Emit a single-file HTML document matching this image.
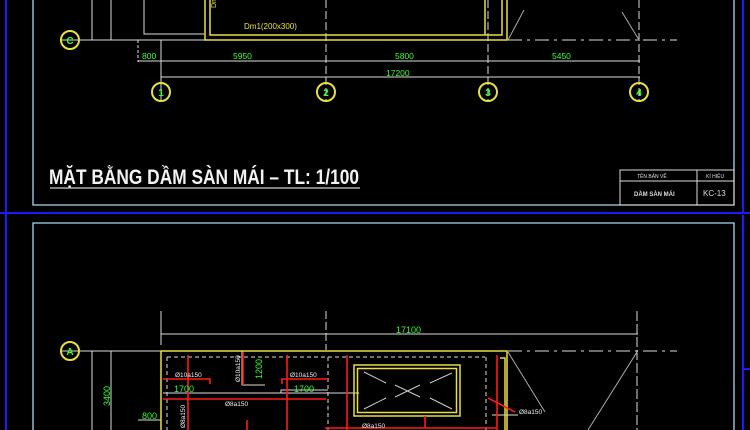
<!DOCTYPE html>
<html><head><meta charset="utf-8"><style>
html,body{margin:0;padding:0;background:#000;width:750px;height:430px;overflow:hidden}
svg{display:block}
text{font-family:"Liberation Sans",sans-serif}
.t{font-family:"Liberation Sans Narrow","Liberation Sans",sans-serif}
</style></head><body>
<svg width="750" height="430" viewBox="0 0 750 430" xmlns="http://www.w3.org/2000/svg">
<rect width="750" height="430" fill="#000"/>
<g stroke="#1a1aff" stroke-width="2" fill="none">
<line x1="6" y1="0" x2="6" y2="430"/>
<line x1="0" y1="213" x2="750" y2="213"/>
<line x1="743" y1="0" x2="743" y2="213"/>
<line x1="743" y1="215" x2="743" y2="430"/>
<line x1="743" y1="369" x2="750" y2="369"/>
</g>
<g stroke="#a8d8f0" stroke-width="1.3" fill="none">
<polyline points="33,0 33,205 734,205 734,0"/>
<polyline points="33,430 33,223 734,223 734,430"/>
</g>

<g stroke="#ddd" stroke-width="1" fill="none">
<line x1="60" y1="40" x2="205" y2="40"/>
<line x1="92" y1="0" x2="92" y2="40"/>
<line x1="111" y1="0" x2="111" y2="40"/>
<polyline points="144,0 144,34 204,34"/>
<line x1="138" y1="61" x2="640" y2="61"/>
<line x1="161" y1="77" x2="640" y2="77"/>
<line x1="138" y1="40" x2="138" y2="62" stroke-dasharray="3,2"/>
<line x1="161" y1="40" x2="161" y2="101"/>
<line x1="326" y1="0" x2="326" y2="101" stroke-dasharray="8,3"/>
<line x1="488" y1="0" x2="488" y2="101" stroke-dasharray="8,3"/>
<line x1="639" y1="0" x2="639" y2="101" stroke-dasharray="8,3"/>
<line x1="508" y1="40" x2="677" y2="40" stroke-dasharray="14,5,3,5"/>
<line x1="508" y1="40" x2="524" y2="10" stroke="#aaa"/>
<line x1="639" y1="40" x2="622" y2="12" stroke="#aaa"/>
</g>
<g stroke="#e8e040" stroke-width="1.5" fill="none">
<polyline points="205,0 205,40 507,40 507,0"/>
<polyline points="210,0 210,35 502,35 502,0"/>
<line x1="485" y1="0" x2="485" y2="35"/>
</g>
<text x="244" y="29" fill="#e8e040" font-size="8">Dm1(200x300)</text>
<text x="216" y="8" fill="#e8e040" font-size="7" transform="rotate(-90 216 8)">Dm</text>
<g fill="#33ff33" font-size="8.5">
<text x="142" y="59">800</text>
<text x="233" y="59">5950</text>
<text x="395" y="59">5800</text>
<text x="552" y="59">5450</text>
<text x="386" y="76">17200</text>
</g>
<g stroke="#e8e040" stroke-width="2" fill="none">
<circle cx="70" cy="40" r="9"/>
<circle cx="161" cy="92" r="9"/>
<circle cx="326" cy="92" r="9"/>
<circle cx="488" cy="92" r="9"/>
<circle cx="639" cy="92" r="9"/>
</g>
<g fill="#33ff33" font-size="10" font-weight="bold" text-anchor="middle">
<text x="70" y="44">C</text><text x="161" y="96">1</text><text x="326" y="96">2</text><text x="488" y="96">3</text><text x="639" y="96">4</text>
</g>
<text class="t" x="49" y="184" fill="#f2f2f2" font-size="21" font-weight="bold" textLength="310" lengthAdjust="spacingAndGlyphs">MẶT BẰNG DẦM SÀN MÁI – TL: 1/100</text>
<line x1="50" y1="188" x2="360" y2="188" stroke="#ccc" stroke-width="1.3"/>
<g stroke="#ddd" stroke-width="1" fill="none">
<rect x="620" y="170" width="114" height="35"/>
<line x1="620" y1="181" x2="734" y2="181"/>
<line x1="697" y1="170" x2="697" y2="205"/>
</g>
<g fill="#ddd">
<text x="637" y="178" font-size="5">TÊN BẢN VẼ</text>
<text x="706" y="178" font-size="5">KÍ HIỆU</text>
<text x="634" y="196" font-size="6" font-weight="bold">DẦM SÀN MÁI</text>
<text x="703" y="196" font-size="8">KC-13</text>
</g>

<g stroke="#ddd" stroke-width="1" fill="none">
<line x1="161" y1="334" x2="638" y2="334"/>
<line x1="161" y1="311" x2="161" y2="345"/>
<line x1="326" y1="311" x2="326" y2="350" stroke-dasharray="8,3"/>
<line x1="637" y1="311" x2="637" y2="430" stroke-dasharray="10,3"/>
<line x1="60" y1="351" x2="161" y2="351"/>
<line x1="92" y1="351" x2="92" y2="430"/>
<line x1="111" y1="351" x2="111" y2="430"/>
<line x1="138" y1="420" x2="161" y2="420"/>
<line x1="508" y1="351" x2="677" y2="351" stroke-dasharray="14,5,3,5"/>
<line x1="508" y1="352" x2="545" y2="412" stroke="#aaa"/>
<line x1="637" y1="352" x2="588" y2="430" stroke="#aaa"/>
<line x1="167" y1="357" x2="485" y2="357" stroke-dasharray="4,3"/>
<line x1="167" y1="357" x2="167" y2="430" stroke-dasharray="4,3"/>
<line x1="328" y1="357" x2="328" y2="430" stroke-dasharray="4,3"/>
<line x1="486" y1="357" x2="486" y2="430" stroke-dasharray="4,3"/>
<polyline points="163,393 359,393"/>
<polyline points="281,393 281,390 328,390"/>
<polyline points="242,351 242,385 265,385"/>
<line x1="492" y1="415" x2="518" y2="415"/>
</g>
<g stroke="#e8e040" stroke-width="1.5" fill="none">
<polyline points="161,430 161,351 507,351 507,430"/>
<polyline points="500,358 505,358 505,430"/>
<rect x="354" y="365" width="106" height="51"/>
<rect x="357.5" y="368.5" width="99" height="44"/>
</g>
<g stroke="#ccc" stroke-width="1" fill="none">
<line x1="364" y1="372" x2="386" y2="383"/>
<line x1="430" y1="383" x2="452" y2="373"/>
<line x1="395" y1="385" x2="420" y2="397"/>
<line x1="395" y1="397" x2="420" y2="385"/>
<line x1="364" y1="409" x2="386" y2="398"/>
<line x1="430" y1="398" x2="452" y2="409"/>
</g>
<g stroke="#ff1a1a" stroke-width="1.6" fill="none">
<line x1="188" y1="355" x2="188" y2="430"/>
<line x1="287" y1="355" x2="287" y2="430"/>
<line x1="347" y1="355" x2="347" y2="430"/>
<line x1="497" y1="355" x2="497" y2="430"/>
<line x1="163" y1="399" x2="326" y2="399"/>
<polyline points="163,379 210,379 210,384"/>
<polyline points="282,384 282,379 328,379"/>
<polyline points="243,352 243,385"/>
<line x1="325" y1="428" x2="496" y2="428"/>
<line x1="425" y1="416" x2="425" y2="428"/>
<polyline points="247,420 247,430"/>
<line x1="488" y1="398" x2="515" y2="412"/>
</g>
<g fill="#33ff33" font-size="9">
<text x="396" y="333">17100</text>
<text x="174" y="392">1700</text>
<text x="294" y="392">1700</text>
<text x="142" y="419">800</text>
<text x="110" y="406" transform="rotate(-90 110 406)">3400</text>
<text x="262" y="379" transform="rotate(-90 262 379)">1200</text>
</g>
<g fill="#eee" font-size="6.5">
<text x="175" y="377">Ø10a150</text>
<text x="290" y="377">Ø10a150</text>
<text x="225" y="406">Ø8a150</text>
<text x="362" y="428">Ø8a150</text>
<text x="519" y="414">Ø8a150</text>
<text x="240" y="382" transform="rotate(-90 240 382)">Ø10a150</text>
<text x="185" y="428" transform="rotate(-90 185 428)">Ø8a150</text>
</g>
<circle cx="70" cy="351" r="9" stroke="#e8e040" stroke-width="2" fill="none"/>
<text x="70" y="355" fill="#33ff33" font-size="10" font-weight="bold" text-anchor="middle">A</text>
</svg>
</body></html>
